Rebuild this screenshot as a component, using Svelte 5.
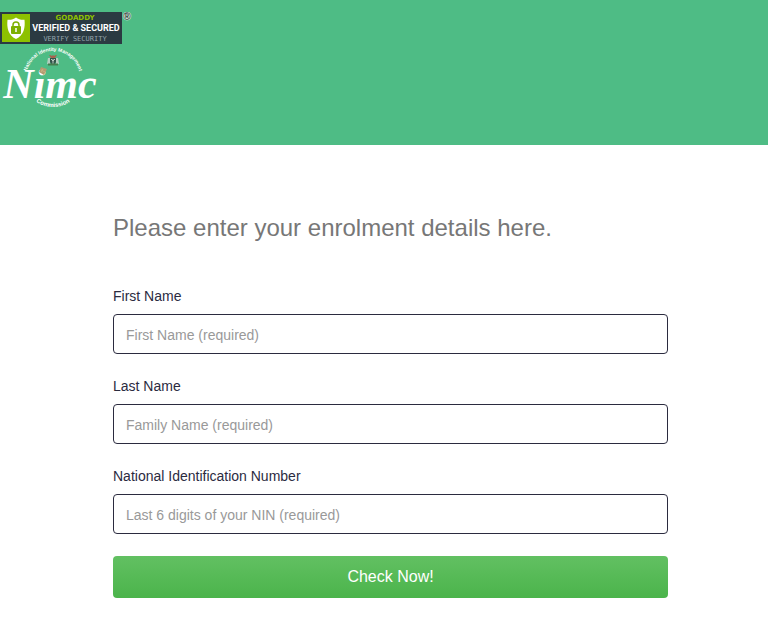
<script lang="ts">
	const fields = [
		{ id: 'first-name', label: 'First Name', placeholder: 'First Name (required)' },
		{ id: 'last-name', label: 'Last Name', placeholder: 'Family Name (required)' },
		{
			id: 'nin',
			label: 'National Identification Number',
			placeholder: 'Last 6 digits of your NIN (required)'
		}
	];

	let values: Record<string, string> = $state({ 'first-name': '', 'last-name': '', nin: '' });

	const handleSubmit = (e: SubmitEvent) => {
		e.preventDefault();
	};
</script>

<header class="banner">
	<svg class="seal" viewBox="0 0 134 32" role="img" aria-label="GoDaddy verified and secured">
		<rect width="122" height="32" fill="#2b3a42" />
		<rect x="2" y="2" width="28" height="28" fill="#8dc100" />
		<path
			d="M16 5.5c2.5 2 5 2.5 8.500 2.300c.8 8-.5 15.500-8.500 19.200c-8-3.700-9.300-11.200-8.500-19.200c3.500 .2 6-.3 8.500-2.300z"
			fill="#fff"
		/>
		<path d="M13 15v-2a3 3 0 0 1 6 0v2" fill="none" stroke="#7db000" stroke-width="1.5" />
		<rect x="11" y="14" width="10" height="8" rx="1" fill="#7db000" />
		<path d="M16 16v4" stroke="#fff" stroke-width="1.5" />
		<text class="seal-brand" x="75" y="8">GODADDY</text>
		<text class="seal-title" x="76" y="19">VERIFIED &amp; SECURED</text>
		<text class="seal-link" x="75" y="29">VERIFY SECURITY</text>
		<text class="seal-mark" x="127" y="8">®</text>
	</svg>

	<svg class="logo" viewBox="0 0 104 68" role="img" aria-label="National Identity Management Commission">
		<defs>
			<path id="arc-top" d="M26 40V34A27 27 0 0 1 80 34V40" />
			<path id="arc-bottom" d="M23 33A30 30 0 0 0 83 33" />
		</defs>
		<text class="logo-ring">
			<textPath href="#arc-top" startOffset="50%">National Identity Management</textPath>
		</text>
		<text class="logo-ring logo-ring-bottom">
			<textPath href="#arc-bottom" startOffset="50%">Commission</textPath>
		</text>
		<g>
			<path d="M50 14h6v4q-1 2-3 3q-2-1-3-3z" fill="#33534a" />
			<path d="M53 15v5M51 15l2 2l2-2" stroke="#b9c9bf" fill="none" />
			<path d="M47 20l1-6h2v6zM59 20l-1-6h-2v6z" fill="#b5cdbf" />
			<path d="M49 11q2 0 3 1l1-1l1 1q1-1 3-1l-2 3h-4z" fill="#a8614f" />
			<path d="M48 20.5h10" stroke="#477d4e" stroke-width="2" />
		</g>
		<text class="logo-name" x="50" y="54">Nimc</text>
		<path d="M41 23l6 2l-3 6l-5-3z" fill="#b39b70" />
		<path d="M43 25l-2 3M41 26l4 2" stroke="#c9b081" stroke-width="1" />
	</svg>
</header>

<main class="content">
	<h1>Please enter your enrolment details here.</h1>

	<form onsubmit={handleSubmit}>
		{#each fields as field (field.id)}
			<div class="field">
				<label for={field.id}>{field.label}</label>
				<input
					id={field.id}
					type="text"
					placeholder={field.placeholder}
					bind:value={values[field.id]}
				/>
			</div>
		{/each}
		<button type="submit">Check Now!</button>
	</form>
</main>

<style>
	:global(body) {
		margin: 0;
		background: #fff;
		font-family: 'Liberation Sans', Arial, sans-serif;
		font-size: 14px;
		color: #2b2b3f;
	}

	.banner {
		display: flex;
		flex-direction: column;
		align-items: flex-start;
		padding: 12px 0 33px;
		background: #4ebc85;
	}

	.seal {
		display: block;
		width: 134px;
		height: 32px;
	}

	.seal text {
		text-anchor: middle;
	}

	.seal-brand {
		font: bold 7px 'DejaVu Sans', sans-serif;
		fill: #8dc100;
	}

	.seal-title {
		font: bold 9px Roboto, sans-serif;
		fill: #fff;
	}

	.seal-link {
		font: 7px 'DejaVu Sans Mono', monospace;
		fill: #94a4ab;
	}

	.seal-mark {
		font: bold 10px 'Liberation Sans', sans-serif;
		fill: #26352f;
		stroke: #dfeee6;
		stroke-width: 1px;
		paint-order: stroke;
	}

	.logo {
		display: block;
		width: 104px;
		height: 68px;
		overflow: visible;
	}

	.logo-ring {
		font: bold 5px 'Liberation Sans', sans-serif;
		fill: #fff;
		text-anchor: middle;
	}

	.logo-ring-bottom {
		font-size: 6px;
	}

	.logo-name {
		font: italic bold 42px 'Liberation Serif', serif;
		fill: #fff;
		text-anchor: middle;
	}

	.content {
		padding: 68px 100px 20px 113px;
	}

	h1 {
		margin: 0 0 43px;
		font-size: 24px;
		font-weight: normal;
		line-height: 30px;
		color: #777;
	}

	.field {
		margin-bottom: 22px;
	}

	label {
		display: block;
		margin-bottom: 8px;
		line-height: 20px;
	}

	input {
		display: block;
		box-sizing: border-box;
		width: 100%;
		height: 40px;
		padding: 2px 12px 0;
		border: 1px solid #2b2b3f;
		border-radius: 4px;
		background: #fff;
		font: inherit;
		color: inherit;
	}

	input::placeholder {
		color: #999;
		opacity: 1;
	}

	button {
		display: block;
		width: 100%;
		height: 42px;
		padding: 0;
		border: 0;
		border-radius: 4px;
		background: linear-gradient(#62c062, #4bb44b);
		font-family: inherit;
		font-size: 16px;
		color: #fff;
		cursor: pointer;
	}
</style>
